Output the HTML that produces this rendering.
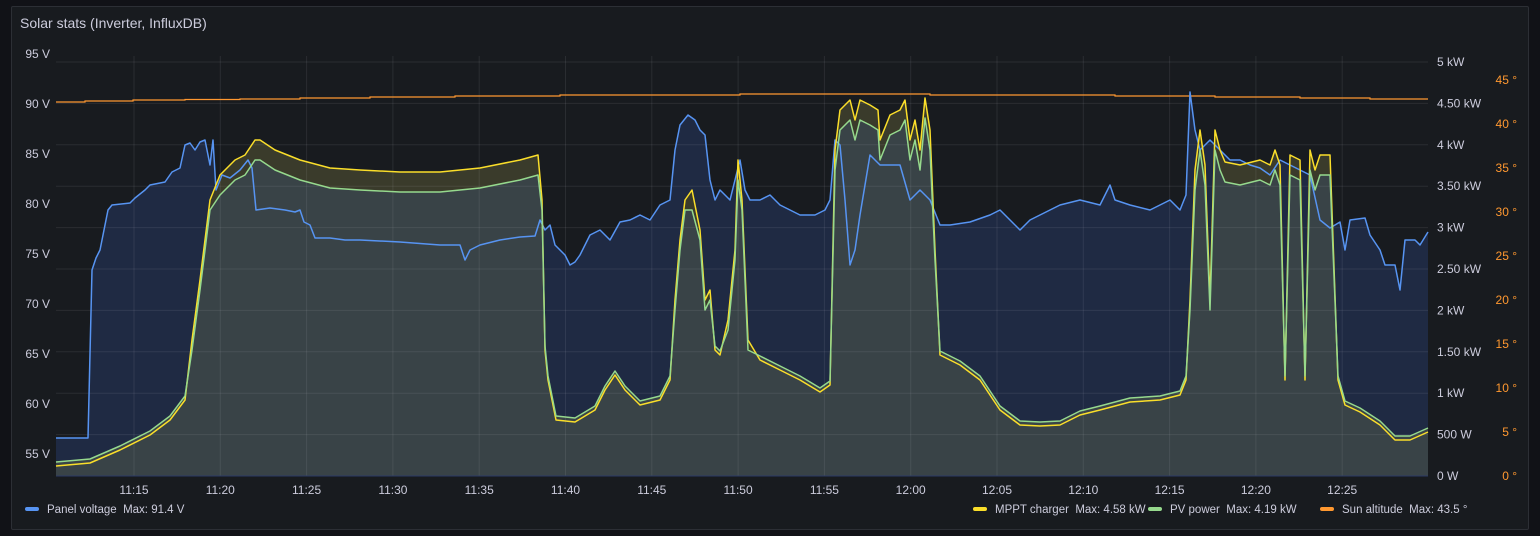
<!DOCTYPE html>
<html><head><meta charset="utf-8"><style>
html,body{margin:0;padding:0;background:#111217;width:1540px;height:536px;overflow:hidden;font-family:"Liberation Sans",sans-serif;}
.panel{position:absolute;left:11px;top:6px;width:1516px;height:522px;background:#181b1f;border:1px solid #2c2f35;border-radius:2px;}
.title{position:absolute;left:20px;top:15px;color:#ccccdc;font-size:14px;}
svg{position:absolute;left:0;top:0}
.lg{position:absolute;top:504px;font-size:11.5px;color:#ccccdc;white-space:nowrap}
.lg i{display:inline-block;width:14px;height:4px;border-radius:2px;vertical-align:middle;margin-right:8px;position:relative;top:-1px}
</style></head><body>
<div class="panel"></div>
<div class="title">Solar stats (Inverter, InfluxDB)</div>
<svg id="s" width="1540" height="536" font-family="Liberation Sans, sans-serif" font-size="12"></svg>
<div class="lg" style="left:25px"><i style="background:#5794f2"></i>Panel voltage&nbsp;&nbsp;Max: 91.4 V</div>
<div class="lg" style="left:973px"><i style="background:#fade2a"></i>MPPT charger&nbsp;&nbsp;Max: 4.58 kW</div>
<div class="lg" style="left:1148px"><i style="background:#96d98d"></i>PV power&nbsp;&nbsp;Max: 4.19 kW</div>
<div class="lg" style="left:1320px"><i style="background:#ff9830"></i>Sun altitude&nbsp;&nbsp;Max: 43.5 °</div>
<script>
const B=[56,438,88,438,92,270,96,258,100,250,108,210,112,205,130,203,135,198,145,190,150,185,165,182,172,172,180,168,185,145,190,143,195,150,200,142,205,140,210,165,213,140,216,190,222,175,230,178,240,170,248,160,252,168,256,210,270,208,285,210,295,212,300,210,304,222,310,225,315,238,330,238,345,240,360,240,400,242,440,245,460,245,465,260,470,250,480,245,500,240,520,237,535,236,540,220,545,230,550,225,555,245,565,255,570,265,575,262,580,255,590,235,600,230,610,240,620,222,630,220,640,215,650,220,660,205,670,200,675,150,680,125,688,115,695,120,700,130,705,135,710,180,715,200,720,190,730,200,740,160,745,190,750,200,760,200,770,195,780,205,800,215,815,215,825,210,830,200,835,140,840,145,845,200,850,265,855,250,860,215,870,155,880,165,890,165,900,165,910,200,920,190,930,200,940,225,950,225,970,222,990,215,1000,210,1010,220,1020,230,1030,220,1040,215,1050,210,1060,205,1080,200,1100,205,1110,185,1115,200,1130,205,1150,210,1170,200,1180,210,1186,195,1190,92,1195,130,1200,150,1210,140,1220,150,1230,160,1240,160,1250,165,1260,168,1270,175,1280,160,1290,165,1300,170,1310,175,1320,220,1330,228,1340,222,1345,250,1350,220,1365,218,1370,235,1380,250,1385,265,1395,265,1400,290,1405,240,1415,240,1420,245,1428,232];
const Y=[56,466,90,463,120,450,150,435,170,420,185,400,192,340,200,280,210,200,220,175,235,160,245,155,255,140,260,140,275,150,300,160,330,168,360,170,400,172,440,172,480,168,520,160,538,155,542,200,545,350,548,380,552,400,556,420,575,422,595,410,605,390,615,375,625,390,640,405,660,400,670,380,675,300,680,240,685,200,692,190,700,230,705,300,710,290,715,350,720,355,728,320,735,250,738,160,742,200,748,340,760,360,780,370,800,380,820,392,830,385,835,150,840,110,850,100,855,120,860,100,870,105,878,110,880,140,890,115,900,110,905,100,910,140,915,120,920,150,925,98,930,130,935,250,940,355,960,365,980,380,1000,410,1020,425,1040,426,1060,425,1080,415,1100,410,1130,402,1160,400,1180,395,1186,380,1190,300,1195,170,1200,130,1205,165,1210,300,1215,130,1220,150,1225,162,1240,165,1260,160,1270,165,1275,150,1280,165,1285,380,1290,155,1300,160,1305,380,1310,150,1315,170,1320,155,1330,155,1338,380,1345,405,1360,412,1380,425,1395,440,1410,440,1428,432];
const G=[];for(let i=0;i<Y.length;i+=2){let y=Y[i+1];let g=y<200?y+20:(y<350?y+10:y-4);G.push(Y[i],g);}
const O=[56,102,85,102,85,101,133,101,133,100,185,100,185,99.5,240,99.5,240,99,300,99,300,98,370,98,370,97,455,97,455,96,560,96,560,95,740,95,740,94,930,94,930,95,1115,95,1115,96,1215,96,1215,97,1300,97,1300,98,1370,98,1370,99,1428,99];
function pts(a){let s='';for(let i=0;i<a.length;i+=2)s+=a[i]+','+a[i+1]+' ';return s;}
function area(a){return pts(a)+'1428,476 56,476';}
let h='';
h+=`<polygon points="${area(B)}" fill="#1f2a43"/>`;
h+=`<polygon points="${area(Y)}" fill="#3a3b2b"/>`;
h+=`<polygon points="${area(G)}" fill="#394347"/>`;
for(let i=0;i<11;i++){let y=62+i*41.4;h+=`<line x1="56" x2="1428" y1="${y}" y2="${y}" stroke="rgba(204,204,220,0.1)"/>`;}
const tl=['11:15','11:20','11:25','11:30','11:35','11:40','11:45','11:50','11:55','12:00','12:05','12:10','12:15','12:20','12:25'];
tl.forEach((t,i)=>{let x=134+i*86.3;h+=`<line x1="${x}" x2="${x}" y1="56" y2="476" stroke="rgba(204,204,220,0.1)"/><text x="${x}" y="494" fill="#ccccdc" text-anchor="middle">${t}</text>`;});
h+=`<line x1="56" x2="1428" y1="476" y2="476" stroke="#2a3a66"/>`;
h+=`<polyline points="${pts(O)}" fill="none" stroke="#ff9830" stroke-width="1.2"/>`;
h+=`<polyline points="${pts(B)}" fill="none" stroke="#5794f2" stroke-width="1.5" stroke-linejoin="round"/>`;
h+=`<polyline points="${pts(Y)}" fill="none" stroke="#fade2a" stroke-width="1.5" stroke-linejoin="round"/>`;
h+=`<polyline points="${pts(G)}" fill="none" stroke="#96d98d" stroke-width="1.5" stroke-linejoin="round"/>`;
['95 V','90 V','85 V','80 V','75 V','70 V','65 V','60 V','55 V'].forEach((t,i)=>{h+=`<text x="50" y="${58+i*50}" fill="#ccccdc" text-anchor="end">${t}</text>`;});
['5 kW','4.50 kW','4 kW','3.50 kW','3 kW','2.50 kW','2 kW','1.50 kW','1 kW','500 W','0 W'].forEach((t,i)=>{h+=`<text x="1437" y="${66+i*41.4}" fill="#ccccdc">${t}</text>`;});
['45 °','40 °','35 °','30 °','25 °','20 °','15 °','10 °','5 °','0 °'].forEach((t,i)=>{h+=`<text x="1517" y="${84+i*44}" fill="#ff9830" text-anchor="end">${t}</text>`;});
document.getElementById('s').innerHTML=h;
</script>
</body></html>
